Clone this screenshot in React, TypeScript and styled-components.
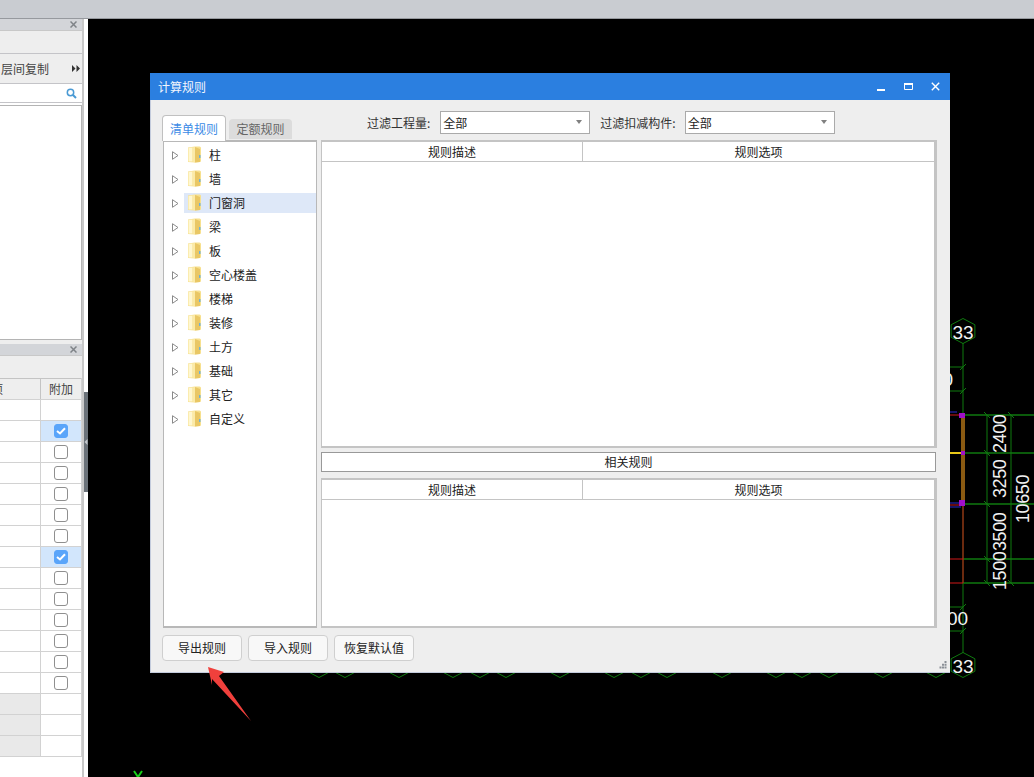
import styled, { createGlobalStyle } from 'styled-components';

const FONT = '"Noto Sans CJK SC", "Liberation Sans", sans-serif';

const GlobalStyle = createGlobalStyle`
  html, body {
    margin: 0;
    padding: 0;
    height: 100%;
    overflow: hidden;
    background: #000;
  }
  * {
    box-sizing: border-box;
  }
  #root {
    height: 100%;
  }
`;

const Page = styled.div`
  display: flex;
  flex-direction: column;
  width: 1034px;
  height: 777px;
  font-family: ${FONT};
  font-size: 12px;
  color: #222;
`;

const TopBar = styled.div`
  flex: none;
  height: 19px;
  background: #c9ccd1;
  border-bottom: 1px solid #96999e;
`;

const Workspace = styled.div`
  flex: 1;
  display: flex;
  min-height: 0;
`;

/* left dock */
const Sidebar = styled.div`
  flex: none;
  position: relative;
  width: 88px;
  display: flex;
  flex-direction: column;
  background: #fff;
  overflow: hidden;
`;

const Dock = styled.div`
  width: 84px;
  height: 100%;
  display: flex;
  flex-direction: column;
  background: #fff;
  border-right: 2px solid #c8c8c8;
`;

const DockHeader = styled.div`
  flex: none;
  height: 11px;
  display: flex;
  align-items: center;
  justify-content: flex-end;
  padding-right: 5px;
  background: #d3d5d9;
  color: #80848a;
`;

const DockToolbar = styled.div<{ $h: number }>`
  flex: none;
  height: ${(p) => p.$h}px;
  background: #eeeeee;
  border-top: 1px solid #c8c8c8;
`;

const CopyRow = styled.div`
  flex: none;
  height: 31px;
  display: flex;
  align-items: center;
  justify-content: space-between;
  padding: 0 2px 1px 1px;
  background: #eeeeee;
  border-top: 1px solid #c4c4c8;
  border-bottom: 1px solid #c4c4c8;
  color: #444;
`;

const SearchRow = styled.div`
  flex: none;
  height: 19px;
  display: flex;
  align-items: center;
  justify-content: flex-end;
  padding-right: 5px;
  background: #fff;
  border-bottom: 1px solid #c4c4c8;
`;

const DockList = styled.div`
  flex: none;
  height: 235px;
  margin-top: 2px;
  background: #fff;
  border: 1px solid #b4b4b4;
  border-left: none;
`;

const DockGap = styled.div`
  flex: none;
  height: 4px;
  background: #eeeeee;
`;

const PropTable = styled.div`
  flex: none;
  width: 82px;
  display: grid;
  grid-template-columns: 41px 40px;
  grid-auto-rows: 21px;
  border-right: 1px solid #d2d2d2;
  border-bottom: 1px solid #d2d2d2;
`;

const PropHead = styled.div`
  display: flex;
  align-items: center;
  justify-content: center;
  overflow: hidden;
  padding-bottom: 1px;
  background: #eeeeee;
  border-top: 1px solid #c4c4c4;
  border-right: 1px solid #c4c4c4;
  color: #444;
  &:nth-child(2) {
    border-right: none;
  }
`;

const ClippedHead = styled.span`
  margin-left: -46px;
  white-space: nowrap;
`;

const PropCell = styled.div<{ $shade?: boolean; $selected?: boolean }>`
  display: flex;
  align-items: center;
  justify-content: center;
  border-top: 1px solid #d2d2d2;
  border-right: 1px solid #d2d2d2;
  background: ${(p) => (p.$shade ? '#e9e9e9' : p.$selected ? '#d2e6fc' : '#fff')};
  &:nth-child(2n) {
    border-right: none;
  }
`;

const CheckBox = styled.div<{ $checked?: boolean }>`
  width: 14px;
  height: 14px;
  display: flex;
  align-items: center;
  justify-content: center;
  border-radius: 3px;
  border: 1px solid ${(p) => (p.$checked ? '#5aa5fa' : '#8f8f8f')};
  background: ${(p) => (p.$checked ? '#5aa5fa' : '#fff')};
`;

const DockHandle = styled.div`
  position: absolute;
  right: 0;
  top: 373px;
  width: 4px;
  height: 100px;
  display: flex;
  align-items: center;
  background: #6b7279;
`;

/* drawing area */
const Canvas = styled.div`
  position: relative;
  flex: 1;
  background: #000;
  overflow: hidden;
`;

const Drawing = styled.svg`
  position: absolute;
  inset: 0;
  width: 100%;
  height: 100%;
`;

const CadText = styled.text<{ $dim?: boolean }>`
  fill: #f2f2f2;
  font-family: 'Liberation Sans', sans-serif;
  font-size: ${(p) => (p.$dim ? 18 : 19)}px;
  letter-spacing: ${(p) => (p.$dim ? -0.4 : 0)}px;
`;

/* dialog */
const Dialog = styled.div`
  position: absolute;
  left: 62px;
  top: 54px;
  width: 800px;
  height: 600px;
  display: flex;
  flex-direction: column;
  background: #eeeeee;
  border-left: 1px solid #c3cbdc;
  border-bottom: 1px solid #c3cbdc;
`;

const TitleBar = styled.div`
  flex: none;
  height: 27px;
  display: flex;
  align-items: center;
  justify-content: space-between;
  padding: 0 10px 0 8px;
  margin-left: -1px;
  background: #2b7fe0;
  color: #f2f6fd;
`;

const WindowButtons = styled.div`
  display: flex;
  align-items: center;
  gap: 18px;
`;

const DialogBody = styled.div`
  flex: 1;
  display: flex;
  flex-direction: column;
  padding: 0 13px 0 11px;
`;

const TopRow = styled.div`
  flex: none;
  height: 40px;
  display: flex;
  align-items: flex-end;
`;

const Tabs = styled.div`
  display: flex;
  align-items: flex-end;
  gap: 3px;
  position: relative;
  z-index: 1;
`;

const Tab = styled.div<{ $active?: boolean }>`
  width: ${(p) => (p.$active ? 64 : 63)}px;
  height: ${(p) => (p.$active ? 26 : 20)}px;
  margin-bottom: ${(p) => (p.$active ? -1 : 1)}px;
  display: flex;
  align-items: center;
  justify-content: center;
  padding-bottom: 1px;
  border-radius: 4px 4px 0 0;
  background: ${(p) => (p.$active ? '#fff' : '#dcdcdc')};
  border: ${(p) => (p.$active ? '1px solid #c0c0c0' : 'none')};
  border-bottom: none;
  color: ${(p) => (p.$active ? '#3b8be6' : '#666')};
`;

const Filters = styled.div`
  align-self: flex-start;
  display: flex;
  align-items: center;
  margin: 11px 0 0 75px;
`;

const FilterLabel = styled.span<{ $first?: boolean }>`
  margin: 0 ${(p) => (p.$first ? 10 : 9)}px 1px ${(p) => (p.$first ? 0 : 10)}px;
  color: #333;
`;

const Combo = styled.div`
  width: 150px;
  height: 23px;
  display: flex;
  align-items: center;
  justify-content: space-between;
  padding: 0 7px 1px 2px;
  background: #fff;
  border: 1px solid #aaa;
`;

const ComboArrow = styled.i`
  width: 0;
  height: 0;
  border-left: 3px solid transparent;
  border-right: 3px solid transparent;
  border-top: 4px solid #808080;
`;

const MainArea = styled.div`
  flex: none;
  height: 488px;
  display: flex;
  gap: 4px;
  padding-left: 1px;
`;

const Tree = styled.div`
  flex: none;
  width: 154px;
  display: flex;
  flex-direction: column;
  gap: 4px;
  padding-top: 3px;
  background: #fff;
  border: 2px solid #b8b8b8;
  border-right-width: 1px;
  border-left-width: 1px;
`;

const TreeRow = styled.div`
  flex: none;
  height: 20px;
  display: flex;
  align-items: center;
  padding-left: 8px;
  color: #222;
`;

const Toggle = styled.svg`
  flex: none;
  width: 7px;
  height: 9px;
  margin-right: 5px;
`;

const TreeLabel = styled.div<{ $selected?: boolean }>`
  flex: 1;
  height: 20px;
  display: flex;
  align-items: center;
  gap: 8px;
  padding: 0 0 1px 4px;
  background: ${(p) => (p.$selected ? '#dee8f8' : 'transparent')};
`;

const RightPane = styled.div`
  flex: 1;
  display: flex;
  flex-direction: column;
  min-width: 0;
`;

const RuleTable = styled.div<{ $h: number }>`
  flex: none;
  height: ${(p) => p.$h}px;
  display: flex;
  flex-direction: column;
  background: #fff;
  border: 1px solid #c4c4c4;
  border-top-width: 2px;
  border-right-width: 3px;
  border-bottom-width: 2px;
`;

const RuleHeader = styled.div`
  flex: none;
  height: 20px;
  display: grid;
  grid-template-columns: 260px 1fr;
  border-bottom: 1px solid #c4c4c4;
`;

const RuleHeadCell = styled.div`
  display: flex;
  align-items: center;
  justify-content: center;
  padding-bottom: 1px;
  color: #222;
  & + & {
    border-left: 1px solid #c4c4c4;
  }
`;

const RelatedBar = styled.div`
  flex: none;
  height: 20px;
  margin: 4px 1px 6px 0;
  display: flex;
  align-items: center;
  justify-content: center;
  padding-bottom: 1px;
  background: #fff;
  border: 1px solid #999;
  color: #222;
`;

const Footer = styled.div`
  flex: none;
  display: flex;
  gap: 6px;
  margin-top: 7px;
`;

const FooterButton = styled.button`
  width: 80px;
  height: 26px;
  padding: 0 0 1px;
  font: inherit;
  color: #222;
  background: #f8f8f8;
  border: 1px solid #cfcfcf;
  border-radius: 4px;
`;

const Grip = styled.svg`
  position: absolute;
  right: 3px;
  bottom: 3px;
  width: 8px;
  height: 8px;
`;

const Arrow = styled.svg`
  position: absolute;
  left: 120px;
  top: 648px;
  width: 45px;
  height: 56px;
`;

const Folder = () => (
  <svg width="13" height="17" viewBox="0 0 13 17">
    <path d="M0 1.500 L7 0.500 L11.500 0.500 Q13 0.500 13 2 L13 15 Q13 16 12 16 L7 16.500 L0 16 Z" fill="#f7e08e" />
    <path d="M0.500 2 L4.500 1.500 L4.500 15.500 L0.500 15.500 Z" fill="#fff7d0" />
    <path d="M4.500 1.500 L7 1 L7 16.500 L4.500 15.500 Z" fill="#fbeaa8" />
    <path d="M7 1 L12 3 L12 16 L7 16.500 Z" fill="#e9c765" />
    <rect x="11" y="9" width="1.500" height="3" fill="#6fb2d8" />
  </svg>
);

const TREE_ITEMS = ['柱', '墙', '门窗洞', '梁', '板', '空心楼盖', '楼梯', '装修', '土方', '基础', '其它', '自定义'];

const HEX_X = [319, 345, 399, 453, 480, 506, 560, 614, 641, 667, 722, 776, 802, 829, 883, 936];

const hexagon = (cx: number, cy: number, r: number) =>
  [
    [0, -1],
    [0.95, -0.5],
    [0.95, 0.5],
    [0, 1],
    [-0.95, 0.5],
    [-0.95, -0.5],
  ]
    .map(([x, y]) => `${cx + x * r},${cy + y * r}`)
    .join(' ');

const GREEN = '#0f7a0f';

const CadDrawing = () => (
  <Drawing viewBox="88 19 946 758">
    {HEX_X.map((x) => (
      <polygon key={x} points={hexagon(x, 665, 12.500)} fill="none" stroke={GREEN} />
    ))}
    <line x1="963" y1="343" x2="963" y2="653" stroke={GREEN} />
    <polygon points={hexagon(963, 331, 12.500)} fill="none" stroke={GREEN} />
    <polygon points={hexagon(963, 665, 12.500)} fill="none" stroke={GREEN} />
    <CadText x="963" y="339" textAnchor="middle">33</CadText>
    <CadText x="963" y="673" textAnchor="middle">33</CadText>

    <path d="M950 367H963M950 391H963M950 607H963M950 631H963" stroke={GREEN} />
    <CadText x="932" y="386">00</CadText>
    <CadText x="947" y="625">00</CadText>

    <path d="M963 415H1034M963 453H1034M963 504H1034M963 559H1034M963 583H1034" stroke={GREEN} strokeWidth="1.400" />
    <path d="M987 415V583M1011 415V583" stroke={GREEN} />
    <path
      d="M984 412l6 6M1008 412l6 6M984 450l6 6M984 501l6 6M984 556l6 6M984 580l6 6M1008 580l6 6M960 370l6 -6M960 394l6 -6M960 610l6 -6M960 634l6 -6"
      stroke={GREEN}
    />

    <path d="M950 559H963M950 583H963M963 505V583" stroke="#d01818" />
    <path d="M950 412H957M950 503H961M950 507H961" stroke="#2a2ad0" />
    <path d="M950 415H961M950 505H961" stroke="#d01818" />
    <line x1="963" y1="415" x2="963" y2="505" stroke="#8a5a12" strokeWidth="4" />
    <line x1="950" y1="453" x2="962" y2="453" stroke="#e8c818" strokeWidth="2" />
    <rect x="959" y="413" width="6" height="5" fill="#a010c8" />
    <rect x="961" y="451" width="4" height="4" fill="#a010c8" />
    <rect x="959" y="500" width="6" height="6" fill="#a010c8" />

    <CadText $dim transform="translate(1006 453) rotate(-90)">2400</CadText>
    <CadText $dim transform="translate(1006 498) rotate(-90)">3250</CadText>
    <CadText $dim transform="translate(1006 551) rotate(-90)">3500</CadText>
    <CadText $dim transform="translate(1006 590) rotate(-90)">1500</CadText>
    <CadText $dim transform="translate(1029 523) rotate(-90)">10650</CadText>

    <path d="M134 771 L138 777 M142 771 L138 777" stroke="#18d018" strokeWidth="2" fill="none" />
  </Drawing>
);

const RuleHead = () => (
  <RuleHeader>
    <RuleHeadCell>规则描述</RuleHeadCell>
    <RuleHeadCell>规则选项</RuleHeadCell>
  </RuleHeader>
);

const CheckMark = () => (
  <svg width="10" height="8" viewBox="0 0 10 8">
    <path d="M1 4 L4 6.500 L9 1.200" fill="none" stroke="#fff" strokeWidth="2" />
  </svg>
);

const PROP_ROWS = Array.from({ length: 17 }, (_, i) => i);

const App = () => (
  <Page>
    <GlobalStyle />
    <TopBar />
    <Workspace>
      <Sidebar>
        <Dock>
          <DockHeader>
            <svg width="7" height="7" viewBox="0 0 7 7">
              <path d="M0.500 0.500L6.500 6.500M6.500 0.500L0.500 6.500" stroke="#7f8388" strokeWidth="1.500" />
            </svg>
          </DockHeader>
          <DockToolbar $h={23} />
          <CopyRow>
            <span>层间复制</span>
            <svg width="8" height="7" viewBox="0 0 8 7">
              <path d="M0 0L3.500 3.500L0 7ZM4.500 0L8 3.500L4.500 7Z" fill="#333" />
            </svg>
          </CopyRow>
          <SearchRow>
            <svg width="11" height="11" viewBox="0 0 11 11">
              <circle cx="4.500" cy="4.500" r="3.200" fill="none" stroke="#4a9ad4" strokeWidth="1.500" />
              <path d="M7 7L10 10" stroke="#4a9ad4" strokeWidth="2" />
            </svg>
          </SearchRow>
          <DockList />
          <DockGap />
          <DockHeader>
            <svg width="7" height="7" viewBox="0 0 7 7">
              <path d="M0.500 0.500L6.500 6.500M6.500 0.500L0.500 6.500" stroke="#7f8388" strokeWidth="1.500" />
            </svg>
          </DockHeader>
          <DockToolbar $h={23} />
          <PropTable>
            <PropHead>
              <ClippedHead>项</ClippedHead>
            </PropHead>
            <PropHead>附加</PropHead>
            {PROP_ROWS.map((i) => {
              const hasBox = i >= 1 && i <= 13;
              const checked = i === 1 || i === 7;
              return [
                <PropCell key={`l${i}`} $shade={i > 13} />,
                <PropCell key={`r${i}`} $selected={checked}>
                  {hasBox && <CheckBox $checked={checked}>{checked && <CheckMark />}</CheckBox>}
                </PropCell>,
              ];
            })}
          </PropTable>
        </Dock>
        <DockHandle>
          <svg width="4" height="6" viewBox="0 0 4 6">
            <path d="M3.500 0L0.500 3L3.500 6Z" fill="#c4c8cc" />
          </svg>
        </DockHandle>
      </Sidebar>

      <Canvas>
        <CadDrawing />
        <Dialog>
          <TitleBar>
            <span>计算规则</span>
            <WindowButtons>
              <svg width="9" height="9" viewBox="0 0 9 9">
                <rect x="0" y="7" width="8" height="2" fill="#fff" />
              </svg>
              <svg width="9" height="9" viewBox="0 0 9 9">
                <path d="M0.500 1.500H8.500V7.500H0.500Z" fill="none" stroke="#fff" />
                <rect x="0" y="1" width="9" height="2" fill="#fff" />
              </svg>
              <svg width="9" height="9" viewBox="0 0 9 9">
                <path d="M0.800 0.800L8.200 8.200M8.200 0.800L0.800 8.200" stroke="#fff" strokeWidth="1.400" />
              </svg>
            </WindowButtons>
          </TitleBar>
          <DialogBody>
            <TopRow>
              <Tabs>
                <Tab $active>清单规则</Tab>
                <Tab>定额规则</Tab>
              </Tabs>
              <Filters>
                <FilterLabel $first>过滤工程量:</FilterLabel>
                <Combo>
                  全部
                  <ComboArrow />
                </Combo>
                <FilterLabel>过滤扣减构件:</FilterLabel>
                <Combo>
                  全部
                  <ComboArrow />
                </Combo>
              </Filters>
            </TopRow>
            <MainArea>
              <Tree>
                {TREE_ITEMS.map((name) => (
                  <TreeRow key={name}>
                    <Toggle viewBox="0 0 7 9">
                      <path d="M0.500 0.700L6 4.500L0.500 8.300Z" fill="#fff" stroke="#8a8a8a" />
                    </Toggle>
                    <TreeLabel $selected={name === '门窗洞'}>
                      <Folder />
                      {name}
                    </TreeLabel>
                  </TreeRow>
                ))}
              </Tree>
              <RightPane>
                <RuleTable $h={308}>
                  <RuleHead />
                </RuleTable>
                <RelatedBar>相关规则</RelatedBar>
                <RuleTable $h={150}>
                  <RuleHead />
                </RuleTable>
              </RightPane>
            </MainArea>
            <Footer>
              <FooterButton>导出规则</FooterButton>
              <FooterButton>导入规则</FooterButton>
              <FooterButton>恢复默认值</FooterButton>
            </Footer>
          </DialogBody>
          <Grip viewBox="0 0 8 8">
            <path d="M5.500 0h2v2h-2zM3 2.800h2v2H3zM5.500 2.800h2v2h-2zM0.500 5.500h2v2h-2zM3 5.500h2v2H3zM5.500 5.500h2v2h-2z" fill="#8a8f96" />
          </Grip>
        </Dialog>
        <Arrow viewBox="0 0 45 56">
          <polygon points="0,0 16,5 11,9 43,54 4,12 4,18" fill="#f0403c" />
        </Arrow>
      </Canvas>
    </Workspace>
  </Page>
);

export default App;
